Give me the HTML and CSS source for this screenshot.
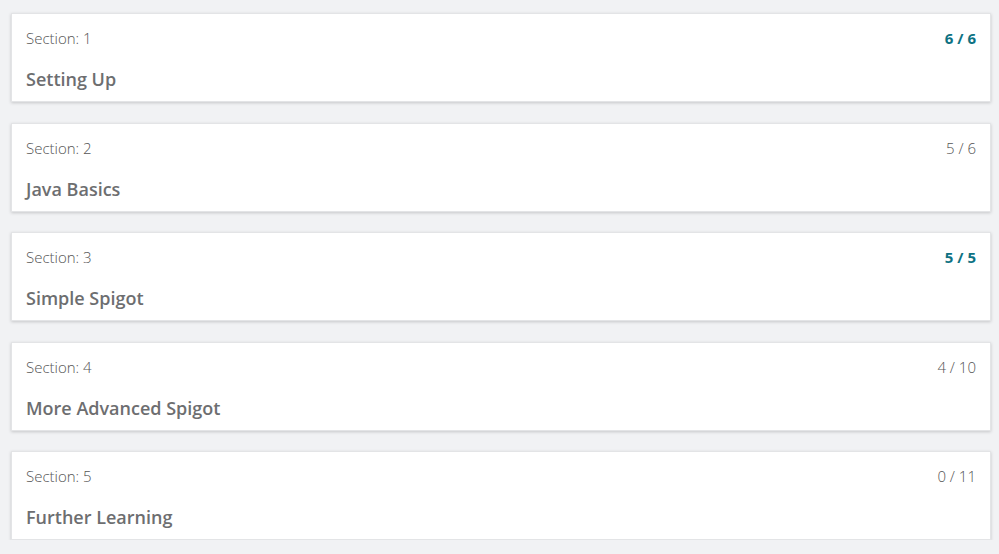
FILE: index.html
```html
<!DOCTYPE html>
<html>
<head>
<meta charset="utf-8">
<link rel="stylesheet" href="styles.css">
</head>
<body>
<div class="list">
  <div class="card">
    <div class="head"><span class="label">Section: 1</span><span class="count done">6 / 6</span></div>
    <div class="title">Setting Up</div>
  </div>
  <div class="card">
    <div class="head"><span class="label">Section: 2</span><span class="count">5 / 6</span></div>
    <div class="title">Java Basics</div>
  </div>
  <div class="card">
    <div class="head"><span class="label">Section: 3</span><span class="count done">5 / 5</span></div>
    <div class="title">Simple Spigot</div>
  </div>
  <div class="card">
    <div class="head"><span class="label">Section: 4</span><span class="count">4 / 10</span></div>
    <div class="title">More Advanced Spigot</div>
  </div>
  <div class="card">
    <div class="head"><span class="label">Section: 5</span><span class="count">0 / 11</span></div>
    <div class="title">Further Learning</div>
  </div>
</div>
</body>
</html>
```
FILE: styles.css
```css
html, body {
  margin: 0;
  background: #f1f2f4;
  font-family: "Open Sans", "Noto Sans", sans-serif;
}
.list {
  padding: 13px 8px 0 11px;
  display: flex;
  flex-direction: column;
  gap: 20.5px;
}
.card {
  background: #fff;
  border: 1px solid #e3e4e6;
  box-shadow: 0 1px 3px rgba(0,0,0,0.18);
  padding: 13px 14px 8px 14px;
  height: 89px;
  box-sizing: border-box;
}
.head {
  display: flex;
  justify-content: space-between;
  align-items: center;
  height: 22px;
}
.label {
  font-size: 15px;
  color: #555;
  font-weight: 300;
}
.count {
  font-size: 15px;
  color: #555;
  font-weight: 300;
}
.count.done {
  color: #0e7283;
  font-weight: 700;
}
.title {
  margin-top: 18px;
  font-size: 18px;
  font-weight: 600;
  color: #6d6e70;
  line-height: 24px;
}
```
